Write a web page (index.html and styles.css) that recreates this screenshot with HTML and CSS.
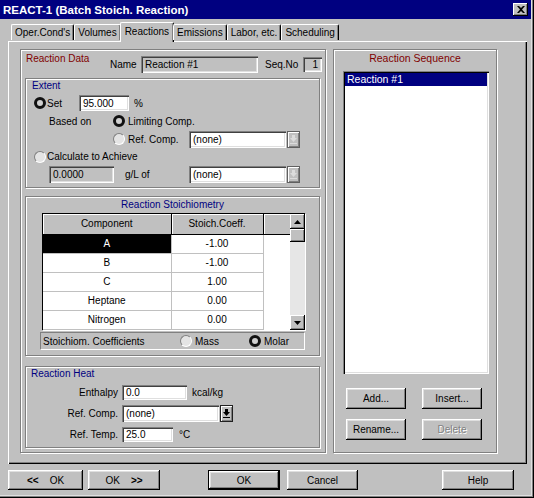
FILE: index.html
```html
<!DOCTYPE html>
<html lang="en">
<head>
  <meta charset="UTF-8" />
  <title>REACT-1 (Batch Stoich. Reaction)</title>
  <link rel="stylesheet" href="styles.css">
</head>
<body>

<div class="window">
  <div class="titlebar">
    <span class="title">REACT-1 (Batch Stoich. Reaction)</span>
    <span class="close">
      <svg width="8" height="7" viewBox="0 0 8 7"><path d="M0 0h2l2 2 2-2h2L5 3.5 8 7H6L4 5 2 7H0l3-3.5z" fill="#000"/></svg>
    </span>
  </div>

  <div class="tabs">
    <div class="tab">Oper.Cond's</div>
    <div class="tab">Volumes</div>
    <div class="tab active">Reactions</div>
    <div class="tab">Emissions</div>
    <div class="tab">Labor, etc.</div>
    <div class="tab">Scheduling</div>
  </div>

  <div class="panel">
    <!-- left side: reaction data -->
    <div class="frame data">
      <div class="data-head">
        <span class="caption red">Reaction Data</span>
        <span class="name-lbl">Name</span>
        <div class="field ro name-box">Reaction #1</div>
        <span class="seq-lbl">Seq.No</span>
        <div class="field ro seq-box">1</div>
      </div>

      <div class="frame inner extent">
        <div class="caption blue">Extent</div>
        <div class="row set-row">
          <span class="radio on"></span>
          <span class="set-lbl">Set</span>
          <div class="field pct">95.000</div>
          <span class="unit">%</span>
        </div>
        <div class="row based-row">
          <span class="based-lbl">Based on</span>
          <span class="radio on"></span>
          <span class="opt">Limiting Comp.</span>
        </div>
        <div class="row ref-row">
          <span class="radio"></span>
          <span class="opt ref-lbl">Ref. Comp.</span>
          <div class="field combo">(none)</div>
          <span class="drop off">
            <svg width="7" height="9" viewBox="0 0 7 9"><path d="M2 0h3v3h2L3.5 7 0 3h2z" fill="#dcdcdc"/><rect y="8" width="7" height="1" fill="#dcdcdc"/></svg>
          </span>
        </div>
        <div class="row calc-row">
          <span class="radio"></span>
          <span class="opt">Calculate to Achieve</span>
        </div>
        <div class="row gl-row">
          <div class="field ro gl-val">0.0000</div>
          <span class="gl-lbl">g/L of</span>
          <div class="field combo">(none)</div>
          <span class="drop off">
            <svg width="7" height="9" viewBox="0 0 7 9"><path d="M2 0h3v3h2L3.5 7 0 3h2z" fill="#dcdcdc"/><rect y="8" width="7" height="1" fill="#dcdcdc"/></svg>
          </span>
        </div>
      </div>

      <div class="frame inner stoich">
        <div class="caption blue center">Reaction Stoichiometry</div>
        <div class="grid">
          <table>
            <tr><th class="c1">Component</th><th class="c2">Stoich.Coeff.</th><th class="c3"></th></tr>
            <tr><td class="sel">A</td><td>-1.00</td><td class="blank"></td></tr>
            <tr><td>B</td><td>-1.00</td><td class="blank"></td></tr>
            <tr><td>C</td><td>1.00</td><td class="blank"></td></tr>
            <tr><td>Heptane</td><td>0.00</td><td class="blank"></td></tr>
            <tr><td>Nitrogen</td><td>0.00</td><td class="blank"></td></tr>
          </table>
          <div class="vscroll">
            <span class="sbtn"><svg width="7" height="4" viewBox="0 0 7 4"><path d="M3.5 0L7 4H0z" fill="#000"/></svg></span>
            <span class="thumb"></span>
            <span class="track"></span>
            <span class="sbtn"><svg width="7" height="4" viewBox="0 0 7 4"><path d="M0 0h7L3.5 4z" fill="#000"/></svg></span>
          </div>
        </div>
        <div class="coef">
          <span class="coef-lbl">Stoichiom. Coefficients</span>
          <span class="radio"></span>
          <span class="opt mass">Mass</span>
          <span class="radio on"></span>
          <span class="opt">Molar</span>
        </div>
      </div>

      <div class="frame inner heat">
        <div class="caption blue">Reaction Heat</div>
        <div class="hrow">
          <span class="hlbl">Enthalpy</span>
          <div class="field enth">0.0</div>
          <span class="unit">kcal/kg</span>
        </div>
        <div class="hrow">
          <span class="hlbl">Ref. Comp.</span>
          <div class="field hcombo">(none)</div>
          <span class="drop">
            <svg width="7" height="9" viewBox="0 0 7 9"><path d="M2 0h3v3h2L3.5 7 0 3h2z" fill="#000"/><rect y="8" width="7" height="1" fill="#000"/></svg>
          </span>
        </div>
        <div class="hrow">
          <span class="hlbl">Ref. Temp.</span>
          <div class="field temp">25.0</div>
          <span class="unit deg">°C</span>
        </div>
      </div>
    </div>

    <!-- right side: sequence -->
    <div class="frame seq">
      <div class="caption red center">Reaction Sequence</div>
      <div class="listbox">
        <div class="item sel">Reaction #1</div>
      </div>
      <div class="btnrow">
        <button class="btn">Add...</button>
        <button class="btn">Insert...</button>
      </div>
      <div class="btnrow">
        <button class="btn">Rename...</button>
        <button class="btn off">Delete</button>
      </div>
    </div>
  </div>

  <div class="footer">
    <button class="btn f-prev"><b>&lt;&lt;</b>&nbsp;&nbsp;&nbsp;&nbsp;OK</button>
    <button class="btn f-next">OK&nbsp;&nbsp;&nbsp;&nbsp;<b>&gt;&gt;</b></button>
    <button class="btn f-ok default">OK</button>
    <button class="btn f-cancel">Cancel</button>
    <button class="btn f-help">Help</button>
  </div>
</div>

</body>
</html>
```

FILE: styles.css
```css
* {
  box-sizing: border-box;
}

body {
  margin: 0;
  background: #c0c0c0;
  font-family: "Liberation Sans", Arial, sans-serif;
  font-size: 10px;
  color: #000;
}

.window {
  width: 534px;
  height: 498px;
  background: #c0c0c0;
  box-shadow: inset -1px -1px #000, inset -2px -2px #808080, inset -3px -3px #dfdfdf;
  overflow: hidden;
}

/* title bar */
.titlebar {
  height: 19px;
  margin-right: 3px;
  padding: 0 3px;
  background: #000080;
  color: #fff;
  font-size: 11.5px;
  font-weight: bold;
  display: flex;
  align-items: center;
  justify-content: space-between;
}

.close {
  width: 15px;
  height: 13px;
  background: #c0c0c0;
  box-shadow: inset -1px -1px #000, inset 1px 1px #fff, inset -2px -2px #808080;
  display: flex;
  align-items: center;
  justify-content: center;
}

/* tabs */
.tabs {
  display: flex;
  align-items: flex-end;
  height: 20px;
  margin-top: 2px;
  padding-left: 11px;
  position: relative;
  z-index: 1;
}

.tab {
  height: 16px;
  padding: 0 3px;
  border-top: 1px solid #fff;
  border-left: 1px solid #fff;
  border-right: 1px solid #000;
  border-radius: 2px 2px 0 0;
  box-shadow: inset -1px 0 #808080;
  display: flex;
  align-items: center;
  margin-bottom: 1px;
}

.tab.active {
  height: 20px;
  margin: 0 -1px -1px -1px;
  padding: 0 4px 2px;
  background: #c0c0c0;
}

/* main tab panel */
.panel {
  width: 519px;
  height: 423px;
  margin-left: 8px;
  padding: 7px 0 0 11px;
  border-top: 1px solid #fff;
  border-left: 1px solid #fff;
  box-shadow: inset -1px -1px #000, inset -2px -2px #808080;
  display: flex;
  gap: 7px;
}

.frame {
  border: 1px solid #808080;
  box-shadow: inset 1px 1px #fff, 1px 1px #fff;
}

.caption.red { color: #800000; }
.caption.blue { color: #000080; }
.caption.center { text-align: center; }

.data {
  width: 306px;
  height: 404px;
  padding: 0 0 0 4px;
}

.data-head {
  display: flex;
  align-items: center;
  height: 28px;
  padding-left: 1px;
}

.data-head .caption {
  width: 84px;
  align-self: flex-start;
  margin-top: 3px;
}

.name-lbl {
  width: 31px;
}

.seq-lbl {
  width: 38px;
  margin-left: 7px;
}

.name-box {
  width: 117px;
  height: 17px;
}

.seq-box {
  width: 19px;
  height: 15px;
  justify-content: flex-end;
}

/* inputs */
.field {
  background: #fff;
  box-shadow: inset 1px 1px #808080, inset 2px 2px #404040, inset -1px -1px #fff, inset -2px -2px #dfdfdf;
  padding: 0 4px;
  display: flex;
  align-items: center;
  white-space: nowrap;
  flex: none;
}

.field.ro {
  background: #c0c0c0;
}

.radio {
  width: 12px;
  height: 12px;
  border-radius: 50%;
  border: 1px solid #808080;
  border-right-color: #fff;
  border-bottom-color: #fff;
  background: #e4e4e4;
  flex: none;
}

.radio.on {
  border: 3px solid #111;
  background: #d0d0d0;
}

.drop {
  width: 13px;
  height: 17px;
  margin-left: 1px;
  border: 1px solid #202020;
  background: #c0c0c0;
  box-shadow: inset 1px 1px #fff, inset -1px -1px #808080;
  display: flex;
  align-items: center;
  justify-content: center;
  flex: none;
}

.drop.off {
  border-color: #606060;
}

/* extent */
.inner {
  width: 295px;
}

.extent {
  height: 110px;
  padding-left: 1px;
}

.extent .caption {
  height: 13px;
  line-height: 13px;
  padding-left: 5px;
}

.row {
  display: flex;
  align-items: center;
  height: 18px;
}

.set-row {
  margin-top: 2px;
  padding-left: 7px;
}

.set-lbl {
  width: 32px;
  margin-left: 1px;
}

.pct {
  width: 50px;
  height: 16px;
}

.unit {
  margin-left: 5px;
}

.based-row {
  padding-left: 22px;
}

.based-lbl {
  width: 64px;
}

.opt {
  margin-left: 3px;
}

.ref-row {
  padding-left: 86px;
}

.ref-lbl {
  width: 61px;
}

.combo {
  width: 97px;
  height: 17px;
}

.calc-row {
  height: 17px;
  padding-left: 7px;
}

.calc-row .opt {
  margin-left: 1px;
}

.gl-row {
  padding-left: 22px;
}

.gl-val {
  width: 65px;
  height: 17px;
}

.gl-lbl {
  width: 64px;
  margin-left: 11px;
}

/* stoichiometry grid */
.stoich {
  height: 160px;
  margin-top: 8px;
}

.stoich .caption {
  height: 16px;
  line-height: 16px;
}

.grid {
  display: flex;
  width: 263px;
  height: 117px;
  margin-left: 16px;
  border-top: 1px solid #000;
  border-left: 1px solid #000;
  box-shadow: 1px 1px #fff;
  background: #fff;
  overflow: hidden;
}

.grid table {
  width: 247px;
  border-collapse: collapse;
  table-layout: fixed;
  align-self: flex-start;
}

.grid th {
  height: 20px;
  padding: 0;
  font-weight: normal;
  background: #c0c0c0;
  border-right: 1px solid #000;
  border-bottom: 1px solid #000;
  box-shadow: inset 1px 1px #fff;
}

.grid th.c1 { width: 128px; }
.grid th.c2 { width: 92px; }
.grid th.c3 { border-right: none; }

.grid td {
  height: 19px;
  padding: 0;
  text-align: center;
  border-right: 1px solid #c0c0c0;
  border-bottom: 1px solid #c0c0c0;
}

.grid td.blank {
  border: none;
}

.grid td.sel {
  background: #000;
  color: #fff;
}

.vscroll {
  width: 15px;
  display: flex;
  flex-direction: column;
  background: #e6e6e6;
}

.sbtn,
.thumb {
  height: 15px;
  background: #c0c0c0;
  box-shadow: inset -1px -1px #000, inset 1px 1px #fff, inset -2px -2px #808080;
  display: flex;
  align-items: center;
  justify-content: center;
  flex: none;
}

.thumb {
  height: 13px;
}

.track {
  flex: 1;
}

.coef {
  display: flex;
  align-items: center;
  width: 265px;
  height: 18px;
  margin: 2px 0 0 14px;
  padding-left: 2px;
  border: 1px solid #808080;
  border-right-color: #fff;
  border-bottom-color: #fff;
}

.coef-lbl {
  width: 137px;
}

.mass {
  width: 54px;
}

/* reaction heat */
.heat {
  height: 82px;
  margin-top: 10px;
}

.heat .caption {
  height: 13px;
  line-height: 13px;
  padding-left: 5px;
}

.hrow {
  display: flex;
  align-items: center;
  height: 16px;
  margin-top: 4px;
}

.hrow + .hrow {
  margin-top: 5px;
}

.hlbl {
  width: 92px;
  margin-right: 4px;
  text-align: right;
}

.enth {
  width: 65px;
  height: 15px;
}

.hcombo {
  width: 97px;
  height: 17px;
}

.temp {
  width: 51px;
  height: 15px;
}

.deg {
  margin-left: 6px;
}

/* reaction sequence */
.seq {
  width: 164px;
  height: 404px;
}

.seq .caption {
  height: 21px;
  line-height: 16px;
  font-size: 10.5px;
}

.listbox {
  width: 146px;
  height: 303px;
  margin-left: 9px;
  padding: 2px;
  background: #fff;
  box-shadow: inset 1px 1px #808080, inset 2px 2px #000, inset -1px -1px #fff, inset -2px -2px #dfdfdf;
}

.item {
  height: 13px;
  padding-left: 2px;
  line-height: 13px;
  font-size: 10.5px;
}

.item.sel {
  background: #000080;
  color: #fff;
}

.btnrow {
  display: flex;
  gap: 16px;
  margin: 14px 0 0 12px;
}

.btnrow + .btnrow {
  margin-top: 10px;
}

.btnrow .btn {
  width: 60px;
  height: 21px;
}

/* buttons */
.btn {
  font: inherit;
  color: #000;
  background: #c0c0c0;
  border: none;
  padding: 0;
  height: 20px;
  box-shadow: inset -1px -1px #000, inset 1px 1px #fff, inset -2px -2px #808080, inset 2px 2px #dfdfdf;
}

.btn.off {
  color: #808080;
  text-shadow: 1px 1px #fff;
}

.btn.default {
  border: 1px solid #000;
}

.footer {
  display: flex;
  align-items: center;
  margin-top: 6px;
  padding-left: 8px;
}

.f-prev { width: 75px; }
.f-next { width: 72px; margin-left: 5px; }
.f-ok { width: 72px; margin-left: 48px; }
.f-cancel { width: 71px; margin-left: 7px; }
.f-help { width: 72px; margin-left: 84px; }
```
